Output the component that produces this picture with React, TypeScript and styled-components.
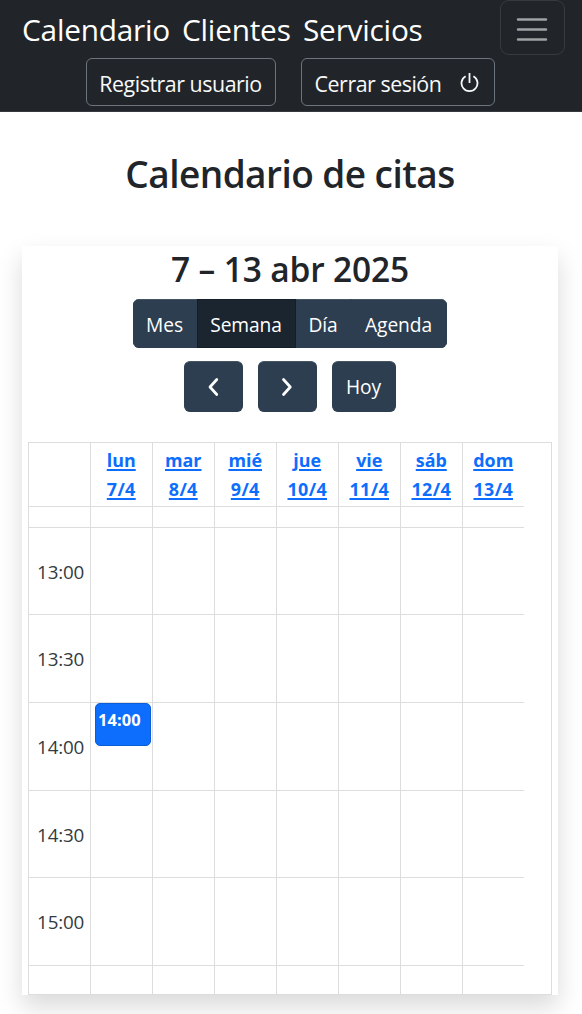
import React from "react";
import styled, { createGlobalStyle } from "styled-components";

const GlobalStyle = createGlobalStyle`
  *, *::before, *::after { box-sizing: border-box; }
  html, body { margin: 0; padding: 0; background: #fff; }
  body {
    height: 1014px;
    overflow: hidden;
    font-family: "Segoe UI", "Open Sans", "Noto Sans", sans-serif;
    color: #212529;
  }
  button { font-family: inherit; color: inherit; margin: 0; padding: 0; }
  h1, h2 { margin: 0; font-weight: 600; }
`;

const Page = styled.div`
  width: 582px;
  height: 1014px;
  overflow: hidden;
`;

const Navbar = styled.header`
  height: 112px;
  background: #212529;
  border-bottom: 1px solid #343a40;
  color: #fff;
`;

const NavTop = styled.div`
  display: flex;
  justify-content: space-between;
  padding: 0 17px 0 22px;
  height: 58px;
`;

const NavLinks = styled.nav`
  display: flex;
  gap: 13px;
  line-height: 60px;
`;

const NavLink = styled.a<{ $w: number }>`
  width: ${(p) => p.$w}px;
  font-size: 29.8px;
  letter-spacing: -0.22px;
  white-space: nowrap;
`;

const Toggler = styled.button`
  display: grid;
  place-items: center;
  width: 65px;
  height: 55px;
  padding: 3px 2px 0 0;
  background: transparent;
  border: 1.5px solid #373b3e;
  border-radius: 9px;
`;

const NavActions = styled.div`
  display: flex;
  justify-content: center;
  gap: 25px;
  padding-right: 2px;
`;

const OutlineButton = styled.button<{ $w: number }>`
  display: flex;
  align-items: center;
  justify-content: center;
  gap: 19px;
  width: ${(p) => p.$w}px;
  height: 48px;
  padding-top: 2px;
  background: transparent;
  border: 1px solid #6c757d;
  border-radius: 6px;
  color: #f8f9fa;
  font-size: 21.4px;
  letter-spacing: -0.47px;
  white-space: nowrap;
`;

const PageTitle = styled.h1`
  height: 134px;
  padding-top: 35px;
  line-height: 54px;
  font-size: 37px;
  letter-spacing: -0.55px;
  text-align: center;
  white-space: nowrap;
  padding-right: 2px;
`;

const Card = styled.main`
  width: 536px;
  height: 749px;
  margin-left: 22px;
  padding: 0 6px;
  background: #fff;
  box-shadow: 0 12px 24px rgba(0, 0, 0, 0.15);
`;

const RangeTitle = styled.h2`
  height: 53px;
  line-height: 46px;
  font-size: 33.5px;
  letter-spacing: -0.15px;
  text-align: center;
  white-space: nowrap;
`;

const ViewSwitch = styled.div`
  display: flex;
  width: 314px;
  height: 49px;
  margin-left: 105px;
  border-radius: 6px;
  overflow: hidden;
`;

const DarkButton = styled.button<{ $w: number; $active?: boolean }>`
  display: grid;
  place-items: center;
  width: ${(p) => p.$w}px;
  height: 100%;
  padding: 2px 1px 0 0;
  border: 1px solid ${(p) => (p.$active ? "#151e27" : "#2c3e50")};
  border-top-color: ${(p) => (p.$active ? "#151e27" : "#455564")};
  background: ${(p) => (p.$active ? "#1a252f" : "#2c3e50")};
  color: #fff;
  font-size: 19.2px;
  letter-spacing: -0.1px;
  white-space: nowrap;
`;

const Pager = styled.div`
  display: flex;
  gap: 15px;
  height: 51px;
  margin: 12.5px 0 30.5px 156px;

  ${DarkButton} {
    padding-top: 1px;
    border-radius: 6px;
  }
`;

const Calendar = styled.section`
  width: 524px;
  height: 553px;
  border: 1px solid #ddd;
  overflow: hidden;
`;

const HeaderRow = styled.div`
  display: flex;
  width: 495px;
  height: 64px;
  border-bottom: 1px solid #ddd;
`;

const SlotRow = styled.div<{ $h: number }>`
  display: flex;
  width: 495px;
  height: ${(p) => p.$h}px;
  border-bottom: 1px solid #ddd;
`;

const AxisCell = styled.div`
  display: flex;
  align-items: center;
  justify-content: flex-end;
  width: 62px;
  padding: 1px 6px 0 0;
  border-right: 1px solid #ddd;
  font-size: 18.8px;
  letter-spacing: -0.2px;
  color: #333a40;
`;

const DayCell = styled.div`
  position: relative;
  flex: 1 1 0;
  border-right: 1px solid #ddd;

  &:last-child {
    border-right: 0;
  }
`;

const DayLink = styled.a`
  display: block;
  padding: 3px 0.5px 0 0;
  color: #0d6efd;
  font-size: 17.9px;
  font-weight: 700;
  line-height: 29px;
  text-align: center;
  text-decoration: underline;
  text-decoration-thickness: 1.5px;
  text-underline-offset: 2px;
`;

const DayDate = styled.span`
  display: block;
  letter-spacing: 0.35px;
`;

const Appointment = styled.div`
  position: absolute;
  top: 0;
  left: 4px;
  width: 56px;
  height: 43px;
  padding: 2px 0 0 2px;
  background: #0d6efd;
  border: 1px solid #0b5ed7;
  border-radius: 5px;
  color: #fff;
  font-size: 16.4px;
  font-weight: 700;
  line-height: 28px;
  letter-spacing: 0.1px;
  z-index: 1;
`;

const days = [
  ["lun", "7/4"],
  ["mar", "8/4"],
  ["mié", "9/4"],
  ["jue", "10/4"],
  ["vie", "11/4"],
  ["sáb", "12/4"],
  ["dom", "13/4"],
];

const slots = [
  { time: "", height: 21 },
  { time: "13:00", height: 87 },
  { time: "13:30", height: 88 },
  { time: "14:00", height: 88 },
  { time: "14:30", height: 87 },
  { time: "15:00", height: 88 },
  { time: "", height: 40 },
];

const MenuIcon = () => (
  <svg width="44" height="44" viewBox="0 0 44 44">
    <path
      d="M8 12.5h28M8 22.5h28M8 32.5h28"
      stroke="#a0a2a4"
      strokeWidth="2.4"
      strokeLinecap="round"
      fill="none"
    />
  </svg>
);

const PowerIcon = () => (
  <svg width="20" height="20" viewBox="0 0 20 20" fill="none">
    <path
      d="M9.5 0v10M5.6 3.2a8 8 0 1 0 7.8 0"
      stroke="#f8f9fa"
      strokeWidth="1.8"
    />
  </svg>
);

const Chevron = ({ d }: { d: string }) => (
  <svg width="20" height="20" viewBox="0 0 20 20" fill="none">
    <path d={d} stroke="#fff" strokeWidth="2.7" strokeLinecap="round" strokeLinejoin="round" />
  </svg>
);

export default function App() {
  return (
    <Page>
      <GlobalStyle />
      <Navbar>
        <NavTop>
          <NavLinks>
            <NavLink $w={147}>Calendario</NavLink>
            <NavLink $w={108}>Clientes</NavLink>
            <NavLink $w={120}>Servicios</NavLink>
          </NavLinks>
          <Toggler aria-label="Menú">
            <MenuIcon />
          </Toggler>
        </NavTop>
        <NavActions>
          <OutlineButton $w={190}>Registrar usuario</OutlineButton>
          <OutlineButton $w={194}>
            Cerrar sesión
            <PowerIcon />
          </OutlineButton>
        </NavActions>
      </Navbar>
      <PageTitle>Calendario de citas</PageTitle>
      <Card>
        <RangeTitle>7 – 13 abr 2025</RangeTitle>
        <ViewSwitch>
          <DarkButton $w={64}>Mes</DarkButton>
          <DarkButton $w={99} $active>Semana</DarkButton>
          <DarkButton $w={55}>Día</DarkButton>
          <DarkButton $w={96}>Agenda</DarkButton>
        </ViewSwitch>
        <Pager>
          <DarkButton $w={59} aria-label="Anterior">
            <Chevron d="M13.8 2.5 7 10l6.8 7.5" />
          </DarkButton>
          <DarkButton $w={59} aria-label="Siguiente">
            <Chevron d="M6.5 2.5 13.3 10l-6.8 7.5" />
          </DarkButton>
          <DarkButton $w={64}>Hoy</DarkButton>
        </Pager>
        <Calendar>
          <HeaderRow>
            <AxisCell />
            {days.map(([name, date]) => (
              <DayCell key={name}>
                <DayLink>
                  {name}
                  <DayDate>{date}</DayDate>
                </DayLink>
              </DayCell>
            ))}
          </HeaderRow>
          {slots.map((slot, row) => (
            <SlotRow key={row} $h={slot.height}>
              <AxisCell>{slot.time}</AxisCell>
              {days.map(([name], col) => (
                <DayCell key={name}>
                  {slot.time === "14:00" && col === 0 && <Appointment>14:00</Appointment>}
                </DayCell>
              ))}
            </SlotRow>
          ))}
        </Calendar>
      </Card>
    </Page>
  );
}
